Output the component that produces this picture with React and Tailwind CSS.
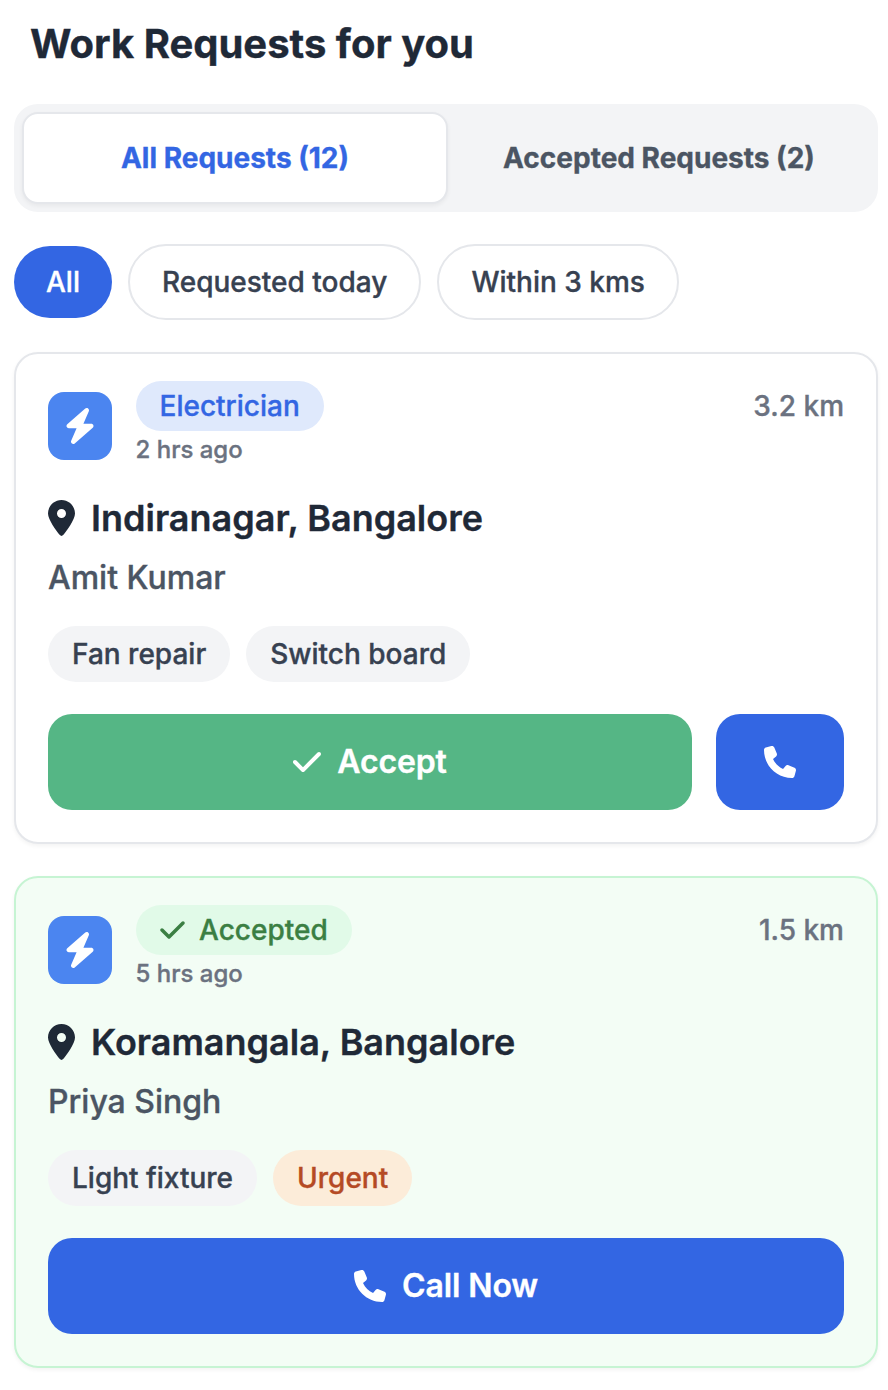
import { FaBolt, FaCheck, FaPhone, FaLocationDot } from "react-icons/fa6";

function Chip({ children, urgent }) {
  return (
    <span className={`flex h-14 items-center rounded-full px-6 text-[28px] font-medium ${urgent ? "bg-[#fcecd9] text-[#b54a24]" : "bg-[#f3f4f6] text-[#374151]"}`}>
      {children}
    </span>
  );
}

function RequestCard({ accepted, time, distance, place, name, children, actions }) {
  return (
    <section className={`h-[492px] rounded-3xl border-2 px-8 shadow-[0_2px_4px_rgba(0,0,0,0.05)] ${accepted ? "border-[#c6f4d3] bg-[#f3fdf5]" : "border-[#e5e7eb] bg-white"}`}>
      <div className="flex pt-[27px]">
        <div className="mt-[11px] flex h-[68px] w-16 items-center justify-center rounded-2xl bg-[#4b85f0] text-white">
          <FaBolt className="size-9" />
        </div>
        <div className="ml-6 flex flex-1 flex-col items-start">
          <span className={`flex h-[50px] items-center rounded-full pr-6 pl-[23.5px] text-[28px] font-medium ${accepted ? "bg-[#e1fae8] text-[#3b7f43]" : "bg-[#dfe9fc] text-[#3366e3]"}`}>
            {accepted && <FaCheck className="mr-[14.5px] h-7 w-[25px]" />}
            {accepted ? "Accepted" : "Electrician"}
          </span>
          <span className="-ml-[0.5px] mt-[3px] text-2xl leading-8 font-medium text-[#6b7280]">{time}</span>
        </div>
        <span className="h-[50px] text-[28px] leading-[50px] font-medium text-[#6b7280]">{distance}</span>
      </div>
      <div className="mt-6 flex h-14 items-center text-[#1f2937]">
        <FaLocationDot className="mr-4 h-9 w-[27px]" />
        <h2 className="text-[36px] leading-[56px] font-semibold">{place}</h2>
      </div>
      <p className="mt-2 text-[32px] leading-12 font-medium text-[#4b5563]">{name}</p>
      <div className="mt-6 flex gap-4">{children}</div>
      <div className="mt-8 flex h-24 gap-6">{actions}</div>
    </section>
  );
}

export default function App() {
  return (
    <main className="min-h-[1390px] w-[888px] bg-white pr-[10px] pl-[14px] font-['Inter',sans-serif] [-webkit-text-stroke:0.35px]">
      <h1 className="h-[104px] pt-4 pl-4 text-[40px] leading-14 font-bold text-[#1f2937]">Work Requests for you</h1>
      <div className="flex h-[108px] rounded-3xl bg-[#f3f4f6] p-2 text-[28px] font-bold">
        <button className="w-[426px] rounded-2xl border-2 border-[#e5e7eb] bg-white text-[#3366e3] shadow-[0_2px_4px_rgba(0,0,0,0.05)]">All Requests (12)</button>
        <button className="flex-1 text-[#4b5563]">Accepted Requests (2)</button>
      </div>
      <div className="mt-8 flex h-[76px] items-center gap-4 text-[28px] font-medium text-[#374151]">
        <button className="h-[72px] rounded-full bg-[#3366e3] px-8 text-white">All</button>
        <button className="h-[76px] rounded-full border-2 border-[#e5e7eb] px-8">Requested today</button>
        <button className="h-[76px] rounded-full border-2 border-[#e5e7eb] px-8">Within 3 kms</button>
      </div>
      <div className="mt-8 flex flex-col gap-8">
        <RequestCard time="2 hrs ago" distance="3.2 km" place="Indiranagar, Bangalore" name="Amit Kumar" actions={<>
          <button className="flex flex-1 items-center justify-center gap-4 rounded-3xl bg-[#55b685] text-[32px] font-semibold tracking-[-0.15px] text-white"><FaCheck className="h-8 w-7" />Accept</button>
          <button aria-label="Call" className="flex w-32 items-center justify-center rounded-3xl bg-[#3366e3] text-white"><FaPhone className="size-8" /></button>
        </>}>
          <Chip>Fan repair</Chip>
          <Chip>Switch board</Chip>
        </RequestCard>
        <RequestCard accepted time="5 hrs ago" distance="1.5 km" place="Koramangala, Bangalore" name="Priya Singh" actions={
          <button className="flex flex-1 items-center justify-center gap-4 rounded-3xl bg-[#3366e3] text-[32px] font-semibold tracking-[-0.1px] text-white"><FaPhone className="size-8" />Call Now</button>
        }>
          <Chip>Light fixture</Chip>
          <Chip urgent>Urgent</Chip>
        </RequestCard>
      </div>
    </main>
  );
}
